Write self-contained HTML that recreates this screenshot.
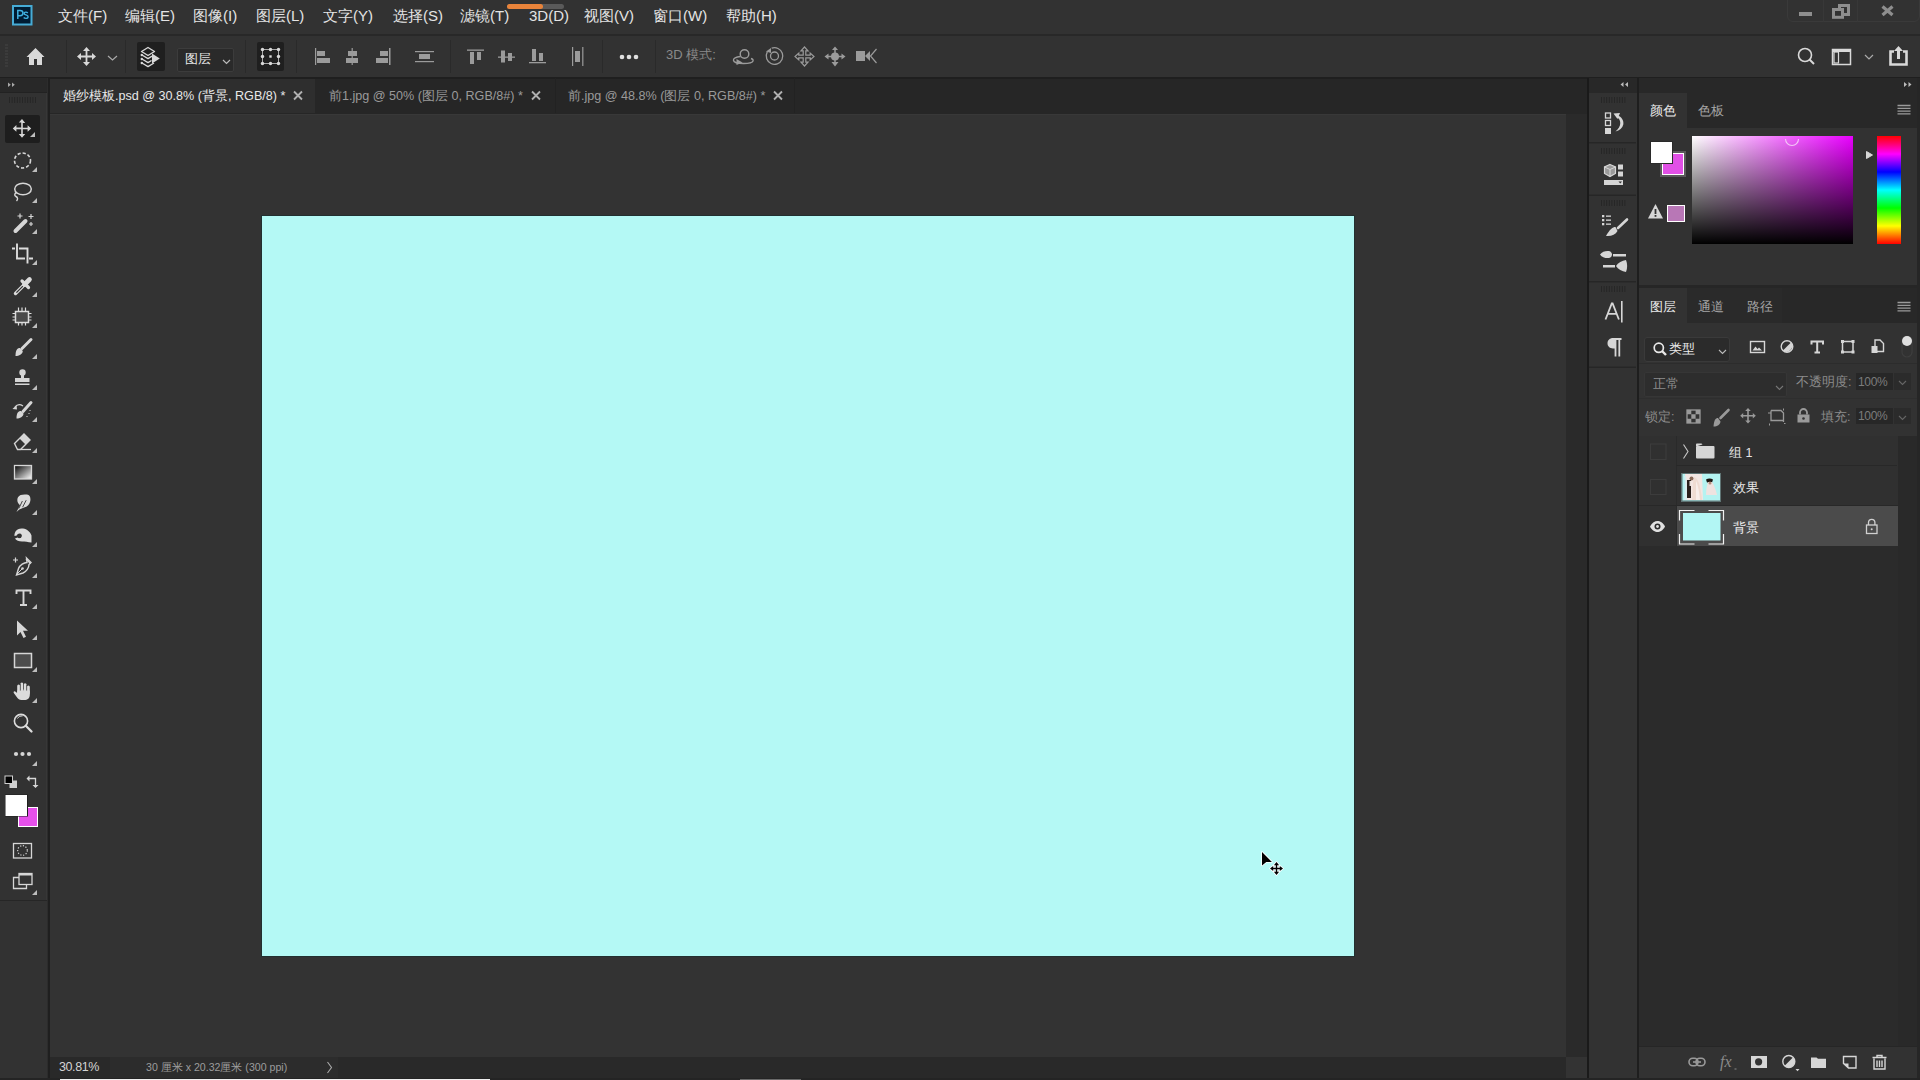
<!DOCTYPE html>
<html><head><meta charset="utf-8">
<style>
*{box-sizing:border-box;margin:0;padding:0}
html,body{width:1920px;height:1080px;overflow:hidden;background:#323232;font-family:"Liberation Sans",sans-serif;color:#d6d6d6}
.a{position:absolute}
.t{position:absolute;white-space:nowrap;line-height:1}
svg{position:absolute;overflow:visible}
</style></head><body>
<!-- menu bar -->
<div class="a" id="menubar" style="left:0;top:0;width:1920px;height:34px;background:#323232"></div>
<div class="a" style="left:0;top:34px;width:1920px;height:2px;background:#282828"></div>

<!-- PS logo -->
<svg style="left:0;top:0" width="40" height="30"><rect x="13" y="6" width="18.5" height="18.5" fill="#001c33" stroke="#46acd6" stroke-width="2"/><path d="M17.8 19V10.5h2.2c2 0 3 1 3 2.6s-1 2.7-3 2.7h-2.2" fill="none" stroke="#3fb0e0" stroke-width="1.5"/><path d="M27.8 13c-0.5-0.6-1.2-0.9-2-0.9-1 0-1.7 0.5-1.7 1.3 0 1.8 4 1 4 3.3 0 1-0.9 1.7-2.2 1.7-0.9 0-1.7-0.3-2.2-0.9" fill="none" stroke="#3fb0e0" stroke-width="1.4"/></svg>
<!-- menu items -->
<div class="t" style="left:58px;top:8px;font-size:15px;color:#e4e4e4">文件(F)</div>
<div class="t" style="left:125px;top:8px;font-size:15px;color:#e4e4e4">编辑(E)</div>
<div class="t" style="left:193px;top:8px;font-size:15px;color:#e4e4e4">图像(I)</div>
<div class="t" style="left:256px;top:8px;font-size:15px;color:#e4e4e4">图层(L)</div>
<div class="t" style="left:323px;top:8px;font-size:15px;color:#e4e4e4">文字(Y)</div>
<div class="t" style="left:393px;top:8px;font-size:15px;color:#e4e4e4">选择(S)</div>
<div class="t" style="left:460px;top:8px;font-size:15px;color:#e4e4e4">滤镜(T)</div>
<div class="t" style="left:529px;top:8px;font-size:15px;color:#e4e4e4">3D(D)</div>
<div class="t" style="left:584px;top:8px;font-size:15px;color:#e4e4e4">视图(V)</div>
<div class="t" style="left:653px;top:8px;font-size:15px;color:#e4e4e4">窗口(W)</div>
<div class="t" style="left:726px;top:8px;font-size:15px;color:#e4e4e4">帮助(H)</div>
<!-- progress -->
<div class="a" style="left:507px;top:4px;width:57px;height:5px;border-radius:3px;background:#5a5a5a"></div>
<div class="a" style="left:507px;top:4px;width:36px;height:5px;border-radius:3px;background:#e8833a"></div>
<!-- window controls -->
<div class="a" style="left:1787px;top:-2px;width:133px;height:24px;border:1px solid #3a3a3a;border-radius:0 0 6px 6px"></div>
<div class="a" style="left:1823px;top:0;width:1px;height:22px;background:#383838"></div>
<div class="a" style="left:1857px;top:0;width:1px;height:22px;background:#383838"></div>
<div class="a" style="left:1799px;top:12px;width:13px;height:4px;background:#8e8e8e"></div>
<svg style="left:0;top:0" width="1920" height="30"><path d="M1839.5 8V5.5h9v9h-4.5" fill="none" stroke="#8e8e8e" stroke-width="3"/><rect x="1833.5" y="9.5" width="9" height="7.8" fill="none" stroke="#8e8e8e" stroke-width="3"/><path d="M1882.5 6.5l10 8.5M1892.5 6.5l-10 8.5" stroke="#8e8e8e" stroke-width="3.2"/></svg>
<!-- options bar -->
<div class="a" id="optbar" style="left:0;top:36px;width:1920px;height:41px;background:#323232"></div>
<div class="a" style="left:0;top:77px;width:1920px;height:2px;background:#1f1f1f"></div>


<!-- options bar content -->
<svg style="left:5px;top:44px" width="4" height="25"><path d="M0 1h3M0 4h3M0 7h3M0 10h3M0 13h3M0 16h3M0 19h3M0 22h3" stroke="#444" stroke-width="1"/></svg>
<svg style="left:26px;top:47px" width="20" height="19"><path d="M9.5 1L0.5 10H3v8h5v-6h3v6h5v-8h2.5z" fill="#d9d9d9"/></svg>
<div class="a" style="left:66px;top:40px;width:1px;height:33px;background:#2a2a2a"></div>
<svg style="left:76px;top:46px" width="21" height="21"><path d="M10.5 1l-3.5 4h2.6v4.6H5V7L1 10.5 5 14v-2.6h4.6V16H7l3.5 4 3.5-4h-2.6v-4.6H16V14l4-3.5L16 7v2.6h-4.6V5H14z" fill="#d9d9d9"/></svg>
<svg style="left:107px;top:55px" width="11" height="6"><path d="M1 1l4.5 4L10 1" fill="none" stroke="#aaa" stroke-width="1.2"/></svg>
<div class="a" style="left:125px;top:40px;width:1px;height:33px;background:#2a2a2a"></div>
<div class="a" style="left:137px;top:42px;width:28px;height:29px;background:#1f1f1f;border-radius:2px"></div>
<svg style="left:0;top:0" width="300" height="80"><path d="M148 47.5l6.5 4-6.5 4-6.5-4z" fill="none" stroke="#d9d9d9" stroke-width="1.4" stroke-linejoin="round"/><path d="M142 55l6 3.6 4-2.4M142 59l6 3.6 3.5-2.1M142 63l6 3.6 6-3.6" fill="none" stroke="#d9d9d9" stroke-width="1.4" stroke-linejoin="round"/><circle cx="141.8" cy="55" r="1.2" fill="#d9d9d9"/><circle cx="141.8" cy="59" r="1.2" fill="#d9d9d9"/><circle cx="141.8" cy="63" r="1.2" fill="#d9d9d9"/><path d="M152 53.5v10l7.8-5z" fill="#d9d9d9"/></svg>
<div class="a" style="left:177px;top:48px;width:57px;height:24px;background:#2a2a2a;border:1px solid #3c3c3c;border-radius:2px"></div>
<div class="t" style="left:185px;top:52px;font-size:13px;color:#e6e6e6">图层</div>
<svg style="left:222px;top:59px" width="9" height="6"><path d="M1 1l3.5 3.5L8 1" fill="none" stroke="#bbb" stroke-width="1.2"/></svg>
<div class="a" style="left:245px;top:40px;width:1px;height:33px;background:#2a2a2a"></div>
<div class="a" style="left:257px;top:42px;width:27px;height:29px;background:#1f1f1f;border-radius:2px"></div>
<svg style="left:0;top:0" width="300" height="80"><rect x="262.5" y="49.5" width="16" height="14" fill="none" stroke="#a8a8a8" stroke-width="1"/><g fill="#d9d9d9"><circle cx="262.5" cy="49.5" r="1.7"/><circle cx="270.5" cy="49.5" r="1.7"/><circle cx="278.5" cy="49.5" r="1.7"/><circle cx="262.5" cy="56.5" r="1.7"/><circle cx="278.5" cy="56.5" r="1.7"/><circle cx="262.5" cy="63.5" r="1.7"/><circle cx="270.5" cy="63.5" r="1.7"/><circle cx="278.5" cy="63.5" r="1.7"/><rect x="269.3" y="55.3" width="2.4" height="2.4"/></g></svg>
<div class="a" style="left:296px;top:40px;width:1px;height:33px;background:#2a2a2a"></div>
<svg style="left:314px;top:47px" width="20" height="20"><g fill="#9b9b9b"><rect x="1" y="1" width="1.2" height="17"/><rect x="3" y="4" width="8" height="5"/><rect x="3" y="11" width="13" height="5"/></g></svg>
<svg style="left:344px;top:47px" width="16" height="20"><g fill="#9b9b9b"><rect x="4" y="4" width="9" height="5"/><rect x="2" y="11" width="12" height="5"/><rect x="7.6" y="1" width="1.2" height="17"/></g></svg>
<svg style="left:374px;top:47px" width="18" height="20"><g fill="#9b9b9b"><rect x="15" y="1" width="1.5" height="17"/><rect x="6" y="4" width="8" height="5"/><rect x="2" y="11" width="12" height="5"/></g></svg>
<svg style="left:414px;top:47px" width="22" height="18"><g fill="#9b9b9b"><rect x="1" y="4" width="19" height="1.2"/><rect x="1" y="14" width="19" height="1.2"/><rect x="5" y="7" width="11" height="5"/></g></svg>
<div class="a" style="left:450px;top:40px;width:1px;height:33px;background:#2a2a2a"></div>
<svg style="left:466px;top:48px" width="20" height="18"><g fill="#9b9b9b"><rect x="1" y="1.5" width="17" height="1.3"/><rect x="4" y="4" width="4" height="12"/><rect x="11" y="4" width="4" height="8"/></g></svg>
<svg style="left:497px;top:48px" width="20" height="18"><g fill="#9b9b9b"><rect x="1" y="8.5" width="17" height="1.3"/><rect x="4" y="2.5" width="4" height="12"/><rect x="11" y="5" width="4" height="8"/></g></svg>
<svg style="left:528px;top:47px" width="20" height="18"><g fill="#9b9b9b"><rect x="1" y="15" width="17" height="1.3"/><rect x="4" y="2" width="4" height="12"/><rect x="11" y="6" width="4" height="8"/></g></svg>
<svg style="left:570px;top:46px" width="16" height="22"><g fill="#9b9b9b"><rect x="2" y="1" width="1.2" height="19"/><rect x="12.2" y="1" width="1.2" height="19"/><rect x="5" y="5" width="5" height="11"/></g></svg>
<div class="a" style="left:602px;top:40px;width:1px;height:33px;background:#2a2a2a"></div>
<svg style="left:618px;top:53px" width="22" height="8"><g fill="#e0e0e0"><circle cx="4" cy="4" r="2.3"/><circle cx="11" cy="4" r="2.3"/><circle cx="18" cy="4" r="2.3"/></g></svg>
<div class="a" style="left:655px;top:40px;width:1px;height:33px;background:#2a2a2a"></div>
<div class="t" style="left:666px;top:48px;font-size:13px;color:#8a8a8a">3D 模式:</div>
<svg style="left:732px;top:47px" width="23" height="19"><circle cx="12.5" cy="7" r="4.3" fill="none" stroke="#9b9b9b" stroke-width="1.4"/><path d="M8.5 9.5C4 10 1 11.5 1.5 13.5c0.5 2 5 3 10 3 5 0 9-1 9.5-2.5 0.3-1-0.5-2-2-2.5" fill="none" stroke="#9b9b9b" stroke-width="1.4"/><path d="M4.5 12l6 3.5-6 2.5z" fill="#9b9b9b"/></svg>
<svg style="left:764px;top:46px" width="21" height="20"><circle cx="10.5" cy="10" r="8.3" fill="none" stroke="#9b9b9b" stroke-width="1.3" stroke-dasharray="46 6" transform="rotate(-110 10.5 10)"/><circle cx="10.5" cy="10" r="4" fill="none" stroke="#9b9b9b" stroke-width="1.3"/><path d="M2 5.5l5-3.5 0 5z" fill="#9b9b9b"/></svg>
<svg style="left:794px;top:46px" width="21" height="21"><path d="M10.5 1L14 4.8H11.8V9.2H16.2V7L20 10.5 16.2 14V11.8H11.8V16.2H14L10.5 20 7 16.2H9.2V11.8H4.8V14L1 10.5 4.8 7V9.2H9.2V4.8H7z" fill="none" stroke="#9b9b9b" stroke-width="1.2" stroke-linejoin="miter"/></svg>
<svg style="left:824px;top:46px" width="22" height="21"><circle cx="11" cy="10.5" r="4" fill="#9b9b9b"/><path d="M11 0.5l-3 3.5h6zM11 20.5l-3.5-4.5h7zM0.5 10.5l4-3v6zM21.5 10.5l-4-3v6z" fill="#9b9b9b"/><path d="M11 4v13M4 10.5h14" stroke="#9b9b9b" stroke-width="1.5"/></svg>
<svg style="left:855px;top:48px" width="23" height="17"><rect x="1" y="3" width="9" height="10" fill="#9b9b9b"/><path d="M10 8l5-5v10z" fill="#9b9b9b"/><path d="M21.5 1l-6 7 6 7" fill="none" stroke="#9b9b9b" stroke-width="1.2"/></svg>
<!-- right side -->
<svg style="left:1797px;top:47px" width="20" height="20"><circle cx="8" cy="8" r="6.5" fill="none" stroke="#d9d9d9" stroke-width="1.6"/><path d="M12.5 12.5l4.5 4.5" stroke="#d9d9d9" stroke-width="2"/></svg>
<svg style="left:1831px;top:48px" width="22" height="18"><rect x="1.5" y="1.5" width="18" height="15" fill="none" stroke="#d9d9d9" stroke-width="1.5"/><rect x="1.5" y="1.5" width="18" height="2.5" fill="#d9d9d9"/><rect x="3" y="4" width="4.5" height="11" fill="none" stroke="#d9d9d9" stroke-width="1.2"/></svg>
<svg style="left:1864px;top:54px" width="10" height="7"><path d="M1 1l4 4 4-4" fill="none" stroke="#aaa" stroke-width="1.2"/></svg>
<svg style="left:1888px;top:45px" width="22" height="22"><path d="M6 6.5H2.5v13h16v-13H15" fill="none" stroke="#d9d9d9" stroke-width="2.6"/><path d="M10.5 1L6 6h3v8h3V6h3z" fill="#d9d9d9"/></svg>

<!-- tool column -->
<div class="a" style="left:0;top:78px;width:48px;height:1002px;background:#323232"></div>
<div class="a" style="left:0;top:78px;width:48px;height:15px;background:#282828"></div>
<div class="a" style="left:0;top:92px;width:48px;height:1px;background:#222"></div>
<div class="a" style="left:48px;top:78px;width:2px;height:1002px;background:#1f1f1f"></div>
<div class="a" style="left:46px;top:93px;width:1px;height:807px;background:#373737"></div>
<div class="a" style="left:47px;top:78px;width:1px;height:1002px;background:#2c2c2c"></div>


<!-- tool content -->
<svg style="left:0;top:0" width="50" height="1080">
<!-- collapse >> -->
<path d="M8 82.5l2.8 2.2-2.8 2.2zM12 82.5l2.8 2.2-2.8 2.2z" fill="#a8a8a8"/>
<!-- grip -->
<rect x="9.0" y="97" width="1" height="6" fill="#262626"/><rect x="11.6" y="97" width="1" height="6" fill="#262626"/><rect x="14.2" y="97" width="1" height="6" fill="#262626"/><rect x="16.8" y="97" width="1" height="6" fill="#262626"/><rect x="19.4" y="97" width="1" height="6" fill="#262626"/><rect x="22.0" y="97" width="1" height="6" fill="#262626"/><rect x="24.6" y="97" width="1" height="6" fill="#262626"/><rect x="27.2" y="97" width="1" height="6" fill="#262626"/><rect x="29.8" y="97" width="1" height="6" fill="#262626"/><rect x="32.4" y="97" width="1" height="6" fill="#262626"/><rect x="35.0" y="97" width="1" height="6" fill="#262626"/>
<!-- selected bg -->
<rect x="5" y="115" width="35" height="28" rx="2" fill="#1e1e1e"/>
<!-- move -->
<path d="M22 119l-3.2 3.6h2.4v4.8h-4.8v-2.4L12.8 128.5l3.6 3.2v-2.4h4.8v4.8h-2.4l3.2 3.6 3.2-3.6h-2.4v-4.8h4.8v2.4l3.6-3.2-3.6-3.2v2.4h-4.8v-4.8h2.4z" fill="#d6d6d6"/>
<path d="M35 132v5h-5z" fill="#bdbdbd"/>
<path d="M37 167v5h-5z" fill="#bdbdbd"/><path d="M37 198v5h-5z" fill="#bdbdbd"/><path d="M37 229v5h-5z" fill="#bdbdbd"/><path d="M37 260v5h-5z" fill="#bdbdbd"/><path d="M37 292v5h-5z" fill="#bdbdbd"/><path d="M37 323v5h-5z" fill="#bdbdbd"/><path d="M37 354v5h-5z" fill="#bdbdbd"/><path d="M37 385v5h-5z" fill="#bdbdbd"/><path d="M37 417v5h-5z" fill="#bdbdbd"/><path d="M37 448v5h-5z" fill="#bdbdbd"/><path d="M37 479v5h-5z" fill="#bdbdbd"/><path d="M37 510v5h-5z" fill="#bdbdbd"/><path d="M37 542v5h-5z" fill="#bdbdbd"/><path d="M37 573v5h-5z" fill="#bdbdbd"/><path d="M37 604v5h-5z" fill="#bdbdbd"/><path d="M37 635v5h-5z" fill="#bdbdbd"/><path d="M37 667v5h-5z" fill="#bdbdbd"/><path d="M37 698v5h-5z" fill="#bdbdbd"/><path d="M37 761v5h-5z" fill="#bdbdbd"/>
<!-- marquee -->
<ellipse cx="22.5" cy="160.5" rx="8" ry="7.5" fill="none" stroke="#d6d6d6" stroke-width="1.6" stroke-dasharray="3.2 2"/>
<!-- lasso -->
<ellipse cx="23" cy="189" rx="8.3" ry="5.8" fill="none" stroke="#d6d6d6" stroke-width="1.5"/>
<path d="M16.5 192.5c-2 1-2.5 3-0.5 4 2 1 2 3 0.5 4.5" fill="none" stroke="#d6d6d6" stroke-width="1.4"/>
<!-- wand -->
<path d="M15.5 231l10-10" stroke="#d6d6d6" stroke-width="4" stroke-linecap="round"/>
<path d="M20 213.5v5M17.5 216h5M31 214v5M28.5 216.5h5M31 222v4M29 224h4" stroke="#d6d6d6" stroke-width="1.2"/>
<!-- crop -->
<path d="M12 248.5h3M17 243.5v15h8M19 248.5h8.5v15M29 258.5h4" fill="none" stroke="#dcdcdc" stroke-width="1.9"/>
<!-- eyedropper -->
<path d="M15.5 293.5l8-8" stroke="#dcdcdc" stroke-width="3.4" stroke-linecap="round" fill="none"/>
<path d="M16.4 292.6l6.5-6.5" stroke="#323232" stroke-width="1.3"/>
<path d="M22 281l6.5 6.5" stroke="#dcdcdc" stroke-width="3.2" stroke-linecap="round"/>
<path d="M24.5 284.5l5-5" stroke="#dcdcdc" stroke-width="4.6" stroke-linecap="round"/>
<!-- frame -->
<rect x="15.5" y="311.5" width="13" height="11" fill="#4a4a4a" stroke="#dcdcdc" stroke-width="1.5"/>
<path d="M18.5 307.5v4M22 307.5v4M25.5 307.5v4M18.5 322.5v3M22 322.5v3M25.5 322.5v3M12.5 313.5h3M12.5 317h3M12.5 320h3M28.5 313.5h3M28.5 317h3M28.5 320h3" stroke="#dcdcdc" stroke-width="1.2"/>
<!-- brush -->
<path d="M31 339.5l-9 9" stroke="#d6d6d6" stroke-width="3" stroke-linecap="round"/>
<path d="M20 348c-3 0-4.5 2.5-4.5 8 3.5 0 7-1.5 7.3-5z" fill="#d6d6d6"/>
<!-- stamp -->
<circle cx="22.5" cy="372.5" r="3.2" fill="#d6d6d6"/>
<path d="M21 375h3v3h5.5v4h-14.5v-4h6z" fill="#d6d6d6"/>
<rect x="15" y="383.5" width="14.5" height="1.5" fill="#d6d6d6"/>
<!-- history brush -->
<path d="M31 402.5l-8 9" stroke="#d6d6d6" stroke-width="3" stroke-linecap="round"/>
<path d="M21 411c-3 0-4.5 2-4.5 7.5 3.5 0 6.8-1.5 7-5z" fill="#d6d6d6"/>
<path d="M23 406c-3-2-6-1.5-8 1" fill="none" stroke="#d6d6d6" stroke-width="1.2"/>
<path d="M12.5 409l4-4 0.5 4.5z" fill="#d6d6d6"/>
<path d="M30 410v1M29 413v1M27 416v1" stroke="#d6d6d6" stroke-width="1"/>
<!-- eraser -->
<path d="M14.5 443.5l9.5-9.5 6 6-9.5 9.5h-3z" fill="none" stroke="#d6d6d6" stroke-width="1.4"/>
<path d="M19.5 438.5l4.5-4.5 6 6-4.5 4.5z" fill="#d6d6d6"/>
<path d="M21 449.5h10" stroke="#d6d6d6" stroke-width="1.3"/>
<!-- gradient -->
<defs><linearGradient id="gg" x1="0" y1="0" x2="1" y2="1"><stop offset="0" stop-color="#000"/><stop offset="1" stop-color="#fff"/></linearGradient></defs>
<rect x="14.5" y="465.5" width="17" height="13.5" fill="url(#gg)" stroke="#d6d6d6" stroke-width="1.3"/>
<!-- blur / smudge (drop) -->
<path d="M16.5 512l3.5-6.8c-2.8-2-3.3-5.5-2-8 1.5-2.5 5-3 9-2.6 3 0.4 3.8 3.2 3.3 6.4-0.5 3.2-3 5.8-6.2 6.6l-4.8 1.8z" fill="#dcdcdc"/>
<path d="M18.8 508.5l3.6-7.5M22.6 507.2l3.6-7" stroke="#323232" stroke-width="0.9"/>
<!-- dodge -->
<path d="M15.5 531.5c1.5-2.5 4.5-3.5 7.5-3 4 0.5 7.5 3.5 8.5 7v7c-3.5-0.5-6.5-1-9.5-1-3 0-6-1-7-3l2.5-1c1 1 3 1 4-0.5 1-1.5 0-3.5-2-3.5-1.5 0-2.5 1-2.7 2l-2.3 0.5c-0.2-1.5 0.2-3 1-4.5z" fill="#dcdcdc"/>
<!-- pen -->
<path d="M15.5 557.5v5M13 560h5" stroke="#d6d6d6" stroke-width="1.2"/>
<path d="M26.5 558l4.5 4.5-2 2c0 3-2.5 7-6 8.5l-6.5 2 2-6.5c1.5-3.5 5.5-6 8.5-6z" fill="none" stroke="#d6d6d6" stroke-width="1.4"/>
<path d="M25.5 559.5l4.5 4.5 1-1-4.5-4.5z" fill="#d6d6d6"/>
<path d="M16.5 574.5l5.5-5.5" stroke="#d6d6d6" stroke-width="1"/>
<circle cx="22.5" cy="568.5" r="1.3" fill="#d6d6d6"/>
<!-- type -->
<path d="M16.5 594v-3.5h14v3.5M23.5 590.5v14.5M20 605h7" fill="none" stroke="#d6d6d6" stroke-width="1.9"/>
<!-- path select -->
<path d="M17 620.5v15l3.5-3.5 3 6 2.5-1.2-3-6h5z" fill="#d6d6d6"/>
<!-- rectangle -->
<rect x="14.5" y="653.5" width="17" height="14" fill="#4d4d4d" stroke="#d6d6d6" stroke-width="1.5"/>
<!-- hand -->
<g fill="#dcdcdc"><rect x="17.2" y="684.5" width="3" height="10" rx="1.5"/><rect x="20.4" y="682.5" width="3" height="11" rx="1.5"/><rect x="23.6" y="683.2" width="3" height="11" rx="1.5"/><rect x="26.8" y="685.5" width="3" height="9" rx="1.5"/>
<path d="M17.2 690.5h12.6v4.5c0 3-2.2 5-5.5 5h-3c-1.8 0-3.2-1-4.2-2.5l-3.3-4.5c-0.6-1 0.3-2 1.4-1.5l2 1.5z"/></g>
<path d="M20.3 684v6.5M23.5 683v6.5M26.7 685v5.5" stroke="#323232" stroke-width="0.6"/>
<!-- zoom -->
<circle cx="21" cy="721" r="6.6" fill="none" stroke="#dcdcdc" stroke-width="1.6"/>
<path d="M17.5 718.5c1-1.8 3-2.8 5-2.5" fill="none" stroke="#dcdcdc" stroke-width="1"/>
<path d="M25.8 725.8l5.7 5.7" stroke="#dcdcdc" stroke-width="2.3" stroke-linecap="round"/>
<!-- more -->
<circle cx="16" cy="754" r="2.1" fill="#d6d6d6"/><circle cx="22.5" cy="754" r="2.1" fill="#d6d6d6"/><circle cx="29" cy="754" r="2.1" fill="#d6d6d6"/>
<!-- default colors -->
<rect x="9.5" y="780.5" width="7.5" height="7.5" fill="#d0d0d0"/>
<rect x="5" y="776" width="7.5" height="7.5" fill="#000" stroke="#d0d0d0" stroke-width="1"/>
<!-- swap -->
<path d="M29 778.5h6.5v6.5" fill="none" stroke="#d6d6d6" stroke-width="1.3"/>
<path d="M26.5 778.5l3-3v6zM35.5 788l-3-3h6z" fill="#d6d6d6"/>
<!-- fg/bg -->
<rect x="18" y="807" width="20" height="20" fill="#fff"/>
<rect x="19" y="808" width="18" height="18" fill="#e550ea"/>
<rect x="5" y="794.5" width="23" height="22" fill="#1e1e1e"/>
<rect x="5.5" y="795" width="21.5" height="21" fill="#fff"/>
<!-- quick mask -->
<rect x="13.5" y="843.5" width="18" height="14.5" fill="none" stroke="#d6d6d6" stroke-width="1.3"/>
<circle cx="22.5" cy="850.5" r="4.8" fill="none" stroke="#d6d6d6" stroke-width="1.2" stroke-dasharray="1.2 1.6"/>
<!-- screen mode -->
<rect x="19" y="873.5" width="13" height="11" fill="#323232" stroke="#d6d6d6" stroke-width="1.3"/>
<rect x="19" y="873.5" width="13" height="2" fill="#d6d6d6"/>
<path d="M19 877.5h-5.5v11h13v-4" fill="none" stroke="#d6d6d6" stroke-width="1.3"/>
<path d="M37 890v5h-5z" fill="#bdbdbd"/>
<!-- panel bottom line -->
<rect x="0" y="900" width="47" height="1" fill="#262626"/>
</svg>

<!-- doc tab bar -->
<div class="a" style="left:50px;top:79px;width:1537px;height:34px;background:#262626"></div>
<div class="a" style="left:50px;top:79px;width:265px;height:34px;background:#2e2e2e"></div>
<div class="a" style="left:50px;top:113px;width:1537px;height:1px;background:#262626"></div>


<!-- tab texts -->
<div class="t" style="left:63px;top:89.5px;font-size:12.6px;color:#e8e8e8">婚纱模板.psd @ 30.8% (背景, RGB/8) *</div>
<svg style="left:293px;top:91px" width="10" height="9"><path d="M1 0.5l8 8M9 0.5l-8 8" stroke="#b0b0b0" stroke-width="1.8"/></svg>
<div class="t" style="left:329px;top:89.5px;font-size:12.6px;color:#9a9a9a">前1.jpg @ 50% (图层 0, RGB/8#) *</div>
<svg style="left:531px;top:91px" width="10" height="9"><path d="M1 0.5l8 8M9 0.5l-8 8" stroke="#b0b0b0" stroke-width="1.8"/></svg>
<div class="a" style="left:555px;top:78px;width:1px;height:35px;background:#222"></div>
<div class="t" style="left:568px;top:89.5px;font-size:12.6px;color:#9a9a9a">前.jpg @ 48.8% (图层 0, RGB/8#) *</div>
<svg style="left:773px;top:91px" width="10" height="9"><path d="M1 0.5l8 8M9 0.5l-8 8" stroke="#b0b0b0" stroke-width="1.8"/></svg>
<div class="a" style="left:794px;top:78px;width:1px;height:35px;background:#222"></div>

<!-- pasteboard -->
<div class="a" style="left:50px;top:114px;width:1516px;height:943px;background:#333333"></div>
<div class="a" style="left:50px;top:114px;width:1516px;height:1px;background:#383838"></div>
<!-- vertical scrollbar track -->
<div class="a" style="left:1566px;top:114px;width:21px;height:943px;background:#2a2a2a"></div>
<!-- status bar -->
<div class="a" style="left:50px;top:1057px;width:1516px;height:23px;background:#292929"></div>
<div class="a" style="left:1566px;top:1057px;width:21px;height:21px;background:#333333"></div>


<div class="a" style="left:50px;top:1057px;width:60px;height:22px;background:#292929"></div>
<div class="a" style="left:110px;top:1057px;width:228px;height:22px;background:#2c2c2c"></div>
<div class="t" style="left:59px;top:1061px;font-size:12.5px;color:#d4d4d4;letter-spacing:-0.4px">30.81%</div>
<div class="t" style="left:146px;top:1062px;font-size:10.6px;color:#9c9c9c">30 厘米 x 20.32厘米 (300 ppi)</div>
<svg style="left:326px;top:1061px" width="8" height="13"><path d="M1.5 1l4 5.5-4 5.5" fill="none" stroke="#aaa" stroke-width="1.1"/></svg>
<div class="a" style="left:60px;top:1079px;width:430px;height:1px;background:#f0f0f0"></div>
<div class="a" style="left:740px;top:1079px;width:61px;height:1px;background:#6a6a6a"></div>

<!-- canvas -->
<div class="a" style="left:261px;top:215px;width:1094px;height:742px;background:#223030"></div>
<div class="a" style="left:262px;top:216px;width:1092px;height:740px;background:#b4f9f5"></div>


<!-- cursor -->
<svg style="left:1250px;top:840px" width="40" height="40"><g stroke="#fff" stroke-width="1.6" stroke-linejoin="round" fill="#fff"><path d="M12 12v13.5l4.3-3.6h5.6z"/><path d="M26.5 24v9M22 28.5h9" stroke-width="3.2"/><path d="M26.5 22l-2.6 3.2h5.2zM26.5 35l-2.6-3.2h5.2zM20 28.5l3.2-2.6v5.2zM33 28.5l-3.2-2.6v5.2z"/></g>
<path d="M12 12v13.5l4.3-3.6h5.6z" fill="#000"/><path d="M26.5 24v9M22 28.5h9" stroke="#000" stroke-width="1.4"/><path d="M26.5 22l-2.6 3.2h5.2zM26.5 35l-2.6-3.2h5.2zM20 28.5l3.2-2.6v5.2zM33 28.5l-3.2-2.6v5.2z" fill="#000"/></svg>
<!-- right separator -->
<div class="a" style="left:1587px;top:78px;width:2px;height:1002px;background:#1a1a1a"></div>
<!-- dock column -->
<div class="a" style="left:1589px;top:78px;width:48px;height:1002px;background:#323232"></div>
<div class="a" style="left:1589px;top:78px;width:48px;height:15px;background:#282828"></div>
<div class="a" style="left:1637px;top:78px;width:2px;height:1002px;background:#1e1e1e"></div>

<!-- panels column -->
<div class="a" style="left:1639px;top:78px;width:281px;height:1002px;background:#323232"></div>
<div class="a" style="left:1639px;top:78px;width:281px;height:15px;background:#282828"></div>

<!-- dock column content -->
<svg style="left:0;top:0" width="1920" height="1080">
<path d="M1628 82l-3 2.5 3 2.5zM1623.5 82l-3 2.5 3 2.5z" fill="#bbb"/>
<path d="M1904 82l3 2.5-3 2.5zM1908.5 82l3 2.5-3 2.5z" fill="#bbb"/>
<rect x="1589" y="142" width="47" height="1.5" fill="#262626"/>
<rect x="1589" y="194.5" width="47" height="1.5" fill="#262626"/>
<rect x="1589" y="281" width="47" height="1.5" fill="#262626"/>
<rect x="1589" y="366.5" width="47" height="1.5" fill="#262626"/>
<rect x="1601.0" y="97" width="1" height="6" fill="#262626"/><rect x="1603.6" y="97" width="1" height="6" fill="#262626"/><rect x="1606.2" y="97" width="1" height="6" fill="#262626"/><rect x="1608.8" y="97" width="1" height="6" fill="#262626"/><rect x="1611.4" y="97" width="1" height="6" fill="#262626"/><rect x="1614.0" y="97" width="1" height="6" fill="#262626"/><rect x="1616.6" y="97" width="1" height="6" fill="#262626"/><rect x="1619.2" y="97" width="1" height="6" fill="#262626"/><rect x="1621.8" y="97" width="1" height="6" fill="#262626"/><rect x="1624.4" y="97" width="1" height="6" fill="#262626"/><rect x="1601.0" y="148" width="1" height="6" fill="#262626"/><rect x="1603.6" y="148" width="1" height="6" fill="#262626"/><rect x="1606.2" y="148" width="1" height="6" fill="#262626"/><rect x="1608.8" y="148" width="1" height="6" fill="#262626"/><rect x="1611.4" y="148" width="1" height="6" fill="#262626"/><rect x="1614.0" y="148" width="1" height="6" fill="#262626"/><rect x="1616.6" y="148" width="1" height="6" fill="#262626"/><rect x="1619.2" y="148" width="1" height="6" fill="#262626"/><rect x="1621.8" y="148" width="1" height="6" fill="#262626"/><rect x="1624.4" y="148" width="1" height="6" fill="#262626"/><rect x="1601.0" y="200" width="1" height="6" fill="#262626"/><rect x="1603.6" y="200" width="1" height="6" fill="#262626"/><rect x="1606.2" y="200" width="1" height="6" fill="#262626"/><rect x="1608.8" y="200" width="1" height="6" fill="#262626"/><rect x="1611.4" y="200" width="1" height="6" fill="#262626"/><rect x="1614.0" y="200" width="1" height="6" fill="#262626"/><rect x="1616.6" y="200" width="1" height="6" fill="#262626"/><rect x="1619.2" y="200" width="1" height="6" fill="#262626"/><rect x="1621.8" y="200" width="1" height="6" fill="#262626"/><rect x="1624.4" y="200" width="1" height="6" fill="#262626"/><rect x="1601.0" y="286" width="1" height="6" fill="#262626"/><rect x="1603.6" y="286" width="1" height="6" fill="#262626"/><rect x="1606.2" y="286" width="1" height="6" fill="#262626"/><rect x="1608.8" y="286" width="1" height="6" fill="#262626"/><rect x="1611.4" y="286" width="1" height="6" fill="#262626"/><rect x="1614.0" y="286" width="1" height="6" fill="#262626"/><rect x="1616.6" y="286" width="1" height="6" fill="#262626"/><rect x="1619.2" y="286" width="1" height="6" fill="#262626"/><rect x="1621.8" y="286" width="1" height="6" fill="#262626"/><rect x="1624.4" y="286" width="1" height="6" fill="#262626"/>
<!-- history -->
<rect x="1605.5" y="113" width="5" height="5" fill="none" stroke="#d6d6d6" stroke-width="1.3"/>
<rect x="1605.5" y="120.5" width="5" height="5" fill="none" stroke="#d6d6d6" stroke-width="1.3"/>
<rect x="1605" y="128" width="6" height="6" fill="#d6d6d6"/>
<path d="M1613.5 113.5l6.5-0.5-2.5 6z" fill="#d6d6d6"/><path d="M1617.5 115.5C1621.5 116.5 1624 120.5 1623.3 124.5 1622.5 128 1619.5 130.5 1615.5 131.5 1618.5 129 1620.3 126 1620.3 123 1620.3 120.5 1619 118.5 1616.8 117.3z" fill="#d6d6d6"/>
<!-- 3D -->
<path d="M1610 164.5l5.5 2.5v6.5l-5.5 3-5.5-3v-6.5z" fill="#9a9a9a" stroke="#d6d6d6" stroke-width="1.2"/>
<path d="M1604.5 167l5.5 2.5 5.5-2.5M1610 169.5v7" fill="none" stroke="#d6d6d6" stroke-width="1"/>
<rect x="1618" y="164.5" width="5" height="5" fill="#d6d6d6"/>
<rect x="1618" y="171.5" width="5" height="5" fill="#d6d6d6"/>
<rect x="1604" y="180" width="19" height="5" fill="#d6d6d6"/>
<path d="M1618.5 181.5h3.5l-1.75 2z" fill="#323232"/>
<!-- brush settings -->
<rect x="1602" y="215" width="2.3" height="2.3" fill="#d6d6d6"/><rect x="1602" y="219" width="2.3" height="2.3" fill="#d6d6d6"/><rect x="1602" y="223" width="2.3" height="2.3" fill="#d6d6d6"/>
<rect x="1606" y="215.5" width="5" height="1.3" fill="#d6d6d6"/><rect x="1606" y="219.5" width="5" height="1.3" fill="#d6d6d6"/><rect x="1606" y="223.5" width="5" height="1.3" fill="#d6d6d6"/>
<path d="M1627 219.5l-9 8.5" stroke="#d6d6d6" stroke-width="2.6" stroke-linecap="round"/>
<path d="M1615.5 227c-3 0-5.5 2-9.5 9 5 0.5 9.5-1 11.5-5z" fill="#d6d6d6"/>
<!-- brush presets -->
<path d="M1600 254.5c2-3 6-4 9-3.5 2 0.5 3 2 3 3.5s-1 3-3 3.5c-3 0.5-7-0.5-9-3.5z" fill="#d6d6d6"/>
<rect x="1613" y="254" width="13" height="2.5" fill="#d6d6d6"/>
<rect x="1603" y="265" width="12" height="2.5" fill="#d6d6d6"/>
<path d="M1616 266c2-3 6-5.5 10-6 1.5 4 1.5 8 0 12-4-0.5-8-3-10-6z" fill="#d6d6d6"/>
<!-- A| -->
<path d="M1605.5 319.5l6.3-16h0.8l6.3 16M1607.8 313.8h8.8" fill="none" stroke="#d6d6d6" stroke-width="1.8"/>
<rect x="1621" y="301" width="1.6" height="21.5" fill="#d6d6d6"/>
<!-- pilcrow -->
<path d="M1613 338h8.5v2h-1.3v16.5h-1.8V340h-2v16.5h-1.8V348.5h-1.6c-3 0-5.5-2-5.5-5.2s2.5-5.3 5.5-5.3z" fill="#d6d6d6"/>
</svg>

<!-- color panel -->
<div class="a" style="left:1639px;top:93px;width:278px;height:35px;background:#282828"></div>
<div class="a" style="left:1639px;top:93px;width:48px;height:35px;background:#323232"></div>
<div class="t" style="left:1650px;top:105px;font-size:12.5px;color:#ececec">颜色</div>
<div class="t" style="left:1698px;top:105px;font-size:12.5px;color:#a6a6a6">色板</div>
<svg style="left:1897px;top:104px" width="14" height="12"><path d="M0.5 1.5h13M0.5 4.3h13M0.5 7.1h13M0.5 9.9h13" stroke="#9a9a9a" stroke-width="1.3"/></svg>
<div class="a" style="left:1917px;top:78px;width:3px;height:1002px;background:#262626"></div>
<!-- fg/bg swatches -->
<div class="a" style="left:1660px;top:151px;width:26px;height:26px;background:#5a5a5a"></div>
<div class="a" style="left:1662px;top:153px;width:22px;height:22px;background:#fff"></div>
<div class="a" style="left:1663px;top:154px;width:20px;height:20px;background:#e150e6"></div>
<div class="a" style="left:1650px;top:141px;width:23px;height:23px;background:#2a2a2a"></div>
<div class="a" style="left:1651px;top:142px;width:21px;height:21px;background:#fff"></div>
<svg style="left:1647px;top:203px" width="18" height="17"><path d="M8.5 1L1 15.5h15z" fill="#d6d6d6"/><rect x="7.6" y="6" width="1.8" height="5" fill="#323232"/><rect x="7.6" y="12" width="1.8" height="1.8" fill="#323232"/></svg>
<div class="a" style="left:1667px;top:205px;width:18px;height:17px;background:#fff"></div>
<div class="a" style="left:1668px;top:206px;width:16px;height:15px;background:#b877b6"></div>
<!-- color field -->
<div class="a" style="left:1692px;top:136px;width:161px;height:108px;background:linear-gradient(to top,#000,rgba(0,0,0,0)),linear-gradient(to right,#fff,#e900ff)"></div>
<svg style="left:1784px;top:128px" width="16" height="20"><path d="M1.5 11a6.5 6.5 0 0 0 13 0" fill="none" stroke="#f4c8f8" stroke-width="1.1"/></svg>
<!-- hue bar -->
<div class="a" style="left:1877px;top:136px;width:24px;height:108px;background:linear-gradient(to bottom,#ff0000 0%,#ff00ff 16.7%,#0000ff 33.3%,#00ffff 50%,#00ff00 66.7%,#ffff00 83.3%,#ff0000 100%)"></div>
<svg style="left:1865px;top:150px" width="9" height="10"><path d="M1.5 1.5l6 3.5-6 3.5z" fill="#d6d6d6" stroke="#d6d6d6" stroke-width="1" stroke-linejoin="round"/></svg>

<!-- layers panel -->
<div class="a" style="left:1639px;top:285px;width:278px;height:3px;background:#262626"></div>
<div class="a" style="left:1639px;top:288px;width:278px;height:35px;background:#282828"></div>
<div class="a" style="left:1687px;top:288px;width:95px;height:35px;background:#2a2a2a"></div>
<div class="a" style="left:1639px;top:288px;width:48px;height:35px;background:#323232"></div>
<div class="t" style="left:1650px;top:301px;font-size:12.5px;color:#ececec">图层</div>
<div class="t" style="left:1698px;top:301px;font-size:12.5px;color:#a6a6a6">通道</div>
<div class="t" style="left:1747px;top:301px;font-size:12.5px;color:#a6a6a6">路径</div>
<svg style="left:1897px;top:301px" width="14" height="12"><path d="M0.5 1.5h13M0.5 4.3h13M0.5 7.1h13M0.5 9.9h13" stroke="#9a9a9a" stroke-width="1.3"/></svg>
<!-- filter row -->
<div class="a" style="left:1644px;top:337px;width:86px;height:25px;background:#2b2b2b;border:1px solid #3a3a3a;border-radius:3px"></div>
<svg style="left:1653px;top:342px" width="15" height="15"><circle cx="5.8" cy="5.8" r="4.6" fill="none" stroke="#e8e8e8" stroke-width="1.7"/><path d="M9 9l4 4" stroke="#e8e8e8" stroke-width="2.4"/></svg>
<div class="t" style="left:1669px;top:343px;font-size:12.5px;color:#ececec">类型</div>
<svg style="left:1718px;top:349px" width="9" height="6"><path d="M1 1l3.5 3.5L8 1" fill="none" stroke="#bbb" stroke-width="1.1"/></svg>
<svg style="left:0;top:0" width="1920" height="1080">
<rect x="1750.5" y="341.5" width="14" height="11" fill="none" stroke="#d6d6d6" stroke-width="1.4"/>
<path d="M1752.5 350.5l3-4 2 2.5 1.5-1.5 3 3z" fill="#d6d6d6"/>
<circle cx="1787" cy="346.5" r="5.8" fill="none" stroke="#d6d6d6" stroke-width="1.4"/>
<path d="M1791 342.5a5.8 5.8 0 0 1-8.1 8.1z" fill="#d6d6d6"/>
<path d="M1811.5 344.5v-3h11.5v3M1817.2 341.5v11M1814.5 352.5h5.5" fill="none" stroke="#d6d6d6" stroke-width="2"/>
<rect x="1842.5" y="341.5" width="10.5" height="10.5" fill="none" stroke="#d6d6d6" stroke-width="1.5"/>
<rect x="1841" y="340" width="3" height="3" fill="#d6d6d6"/><rect x="1851.5" y="340" width="3" height="3" fill="#d6d6d6"/><rect x="1841" y="350.5" width="3" height="3" fill="#d6d6d6"/><rect x="1851.5" y="350.5" width="3" height="3" fill="#d6d6d6"/>
<path d="M1875 340h5l3.5 3.5v8h-8.5z" fill="none" stroke="#d6d6d6" stroke-width="1.4"/>
<rect x="1871.5" y="346" width="6" height="7" fill="#d6d6d6"/>
<rect x="1902" y="336" width="10" height="21" rx="5" fill="none" stroke="#3e3e3e" stroke-width="1.2"/>
<circle cx="1907" cy="341" r="5" fill="#e0e0e0"/>
</svg>
<div class="a" style="left:1639px;top:363px;width:278px;height:1px;background:#2c2c2c"></div>
<!-- blend mode -->
<div class="a" style="left:1644px;top:372px;width:143px;height:25px;background:#2d2d2d;border:1px solid #363636;border-radius:2px"></div>
<div class="t" style="left:1653px;top:378px;font-size:12.5px;color:#8c8c8c">正常</div>
<svg style="left:1775px;top:385px" width="9" height="6"><path d="M1 1l3.5 3.5L8 1" fill="none" stroke="#777" stroke-width="1.1"/></svg>
<div class="t" style="left:1796px;top:376px;font-size:12.5px;color:#8c8c8c">不透明度:</div>
<div class="a" style="left:1856px;top:373px;width:37px;height:17px;background:#272727"></div>
<div class="t" style="left:1858px;top:376px;font-size:12px;color:#7c7c7c;letter-spacing:-0.3px">100%</div>
<div class="a" style="left:1894px;top:373px;width:17px;height:17px;background:#2b2b2b"></div>
<svg style="left:1898px;top:380px" width="9" height="6"><path d="M1 1l3.5 3.5L8 1" fill="none" stroke="#666" stroke-width="1.1"/></svg>
<div class="a" style="left:1639px;top:398px;width:278px;height:1px;background:#2e2e2e"></div>
<!-- lock row -->
<div class="t" style="left:1645px;top:411px;font-size:12.5px;color:#8c8c8c">锁定:</div>
<svg style="left:0;top:0" width="1920" height="1080">
<rect x="1687" y="410" width="13" height="13" fill="none" stroke="#9a9a9a" stroke-width="1.3"/>
<path d="M1687 410h4.3v4.3h-4.3zM1695.6 410h4.4v4.3h-4.4zM1691.3 414.3h4.3v4.4h-4.3zM1687 418.7h4.3v4.3h-4.3zM1695.6 418.7h4.4v4.3h-4.4z" fill="#9a9a9a"/>
<path d="M1728.5 410l-8 8" stroke="#9a9a9a" stroke-width="2.6" stroke-linecap="round"/>
<path d="M1718 418c-2.5 0-4 2-4.5 8.5 4 0 6.5-1.5 7-5z" fill="#9a9a9a"/>
<path d="M1748 408l-2.8 3h2v4h-4v-2l-3 2.8 3 2.8v-2h4v4h-2l2.8 3 2.8-3h-2v-4h4v2l3-2.8-3-2.8v2h-4v-4h2z" fill="#9a9a9a"/>
<path d="M1771 410.5h10l2.5 2.5v9M1771 410.5v10h12.5" fill="none" stroke="#9a9a9a" stroke-width="1.3"/>
<path d="M1768 413h3M1769.5 423.5v2M1783.5 408.5v2M1784 423.5h1.5" stroke="#9a9a9a" stroke-width="1"/>
<path d="M1800 414.5v-2a3.5 3.5 0 0 1 7 0v2" fill="none" stroke="#9a9a9a" stroke-width="1.8"/>
<rect x="1797.5" y="414.5" width="12" height="8" fill="#9a9a9a"/>
<circle cx="1803.5" cy="418.5" r="1.3" fill="#323232"/>
</svg>
<div class="t" style="left:1821px;top:411px;font-size:12.5px;color:#8c8c8c">填充:</div>
<div class="a" style="left:1856px;top:408px;width:37px;height:16px;background:#272727"></div>
<div class="t" style="left:1858px;top:410px;font-size:12px;color:#7c7c7c;letter-spacing:-0.3px">100%</div>
<div class="a" style="left:1894px;top:408px;width:17px;height:16px;background:#2b2b2b"></div>
<svg style="left:1898px;top:415px" width="9" height="6"><path d="M1 1l3.5 3.5L8 1" fill="none" stroke="#666" stroke-width="1.1"/></svg>

<!-- layer list -->
<div class="a" style="left:1639px;top:436px;width:259px;height:611px;background:#2b2b2b"></div>
<div class="a" style="left:1898px;top:436px;width:19px;height:611px;background:#292929"></div>
<div class="a" style="left:1639px;top:436px;width:259px;height:110px;background:#303030"></div>
<div class="a" style="left:1676px;top:436px;width:1px;height:110px;background:#2a2a2a"></div>
<div class="a" style="left:1676px;top:465px;width:221px;height:1px;background:#282828"></div>
<div class="a" style="left:1639px;top:505px;width:259px;height:1px;background:#282828"></div>
<div class="a" style="left:1677px;top:506px;width:221px;height:40px;background:#4b4b4b"></div>
<svg style="left:0;top:0" width="1920" height="1080">
<rect x="1650.5" y="444" width="15.5" height="15.5" fill="none" stroke="#3c3c3c" stroke-width="1"/>
<rect x="1650.5" y="479.5" width="15.5" height="15" fill="none" stroke="#3c3c3c" stroke-width="1"/>
<path d="M1683.5 444.5l4.5 7-4.5 7" fill="none" stroke="#c8c8c8" stroke-width="1.1"/>
<path d="M1696 446.5v-2c0-0.5 0.5-1 1-1h4.5l1 1h0z" fill="#d6d6d6"/>
<rect x="1696" y="446" width="18.5" height="12.5" rx="1" fill="#d6d6d6"/>
<path d="M1650 526.5c2-4 5-5.5 7.5-5.5s5.5 1.5 7.5 5.5c-2 4-5 5.5-7.5 5.5s-5.5-1.5-7.5-5.5z" fill="#e0e0e0"/>
<circle cx="1657.5" cy="526.5" r="3" fill="#2b2b2b"/>
<circle cx="1657.5" cy="526.5" r="1.4" fill="#e0e0e0"/>
<!-- thumb effect -->
<rect x="1681" y="473" width="40" height="29" fill="#5f7474"/>
<rect x="1682.5" y="474" width="37.5" height="26.5" fill="#b4f3f1"/>
<path d="M1685 474h17l1 26h-18z" fill="#f3e6e2"/>
<path d="M1684 476c1 4 1 10 0 24h3c0-8 0-16-1-24z" fill="#d8eef0"/>
<path d="M1694 477c3 1 5 5 6 10 1 5 2 9 2 13h-10c1-6 0-14 2-23z" fill="#efdcd2"/>
<path d="M1696 481c2 4 3 10 4 19h-4z" fill="#f8eeea"/>
<rect x="1687" y="480" width="4" height="18" fill="#2a201c"/>
<rect x="1689.5" y="481" width="1.5" height="5" fill="#e8e0dc"/>
<circle cx="1691.5" cy="478.5" r="2" fill="#8a6a58"/>
<path d="M1706 479.5c2-1.5 5-1.5 7 0l-1 3h-5z" fill="#1c1612"/>
<path d="M1708 482h4c2 3 4 8 5 13h-11c0-5 1-10 2-13z" fill="#efe3e0"/>
<circle cx="1710" cy="483" r="1.5" fill="#b08a78"/>
<!-- thumb bg selected -->
<rect x="1683" y="513" width="37.5" height="27.5" fill="#b2f6f4"/>
<path d="M1679.5 520.5v-10h15M1708.5 510.5h15v10M1679.5 534v10h15M1708.5 544h15v-10" fill="none" stroke="#f2f2f2" stroke-width="1.2"/>
<!-- lock -->
<path d="M1868.5 525v-2.5a3.2 3.2 0 0 1 6.4 0v2.5" fill="none" stroke="#d0d0d0" stroke-width="1.3"/>
<rect x="1866.5" y="525" width="10.5" height="8.5" fill="none" stroke="#d0d0d0" stroke-width="1.3"/>
<circle cx="1871.7" cy="529.3" r="1" fill="#d0d0d0"/>
</svg>
<div class="t" style="left:1729px;top:446.5px;font-size:12.5px;color:#e6e6e6">组 1</div>
<div class="t" style="left:1733px;top:481.5px;font-size:12.5px;color:#e6e6e6">效果</div>
<div class="t" style="left:1733px;top:522px;font-size:12.5px;color:#ececec">背景</div>

<!-- layers footer -->
<div class="a" style="left:1639px;top:1046px;width:278px;height:1px;background:#262626"></div>
<div class="a" style="left:1640px;top:1047px;width:277px;height:29px;background:#323232"></div>
<svg style="left:0;top:0" width="1920" height="1080">
<rect x="1689" y="1058.3" width="9" height="7.4" rx="3.7" fill="none" stroke="#9a9a9a" stroke-width="1.6"/>
<rect x="1696" y="1058.3" width="9" height="7.4" rx="3.7" fill="none" stroke="#9a9a9a" stroke-width="1.6"/>
<rect x="1693" y="1061.2" width="8" height="1.6" fill="#9a9a9a"/>
<text x="1720" y="1067" font-family="Liberation Serif" font-style="italic" font-size="16" fill="#8a8a8a">fx</text>
<rect x="1734.5" y="1068.5" width="2" height="1" fill="#8a8a8a"/>
<rect x="1751" y="1056" width="16" height="12" fill="#d6d6d6"/>
<circle cx="1758.6" cy="1061.8" r="3.6" fill="#323232"/>
<circle cx="1788.8" cy="1061.5" r="6" fill="none" stroke="#d6d6d6" stroke-width="1.4"/>
<path d="M1793.1 1057.2a6 6 0 0 1-8.5 8.5z" fill="#d6d6d6"/>
<path d="M1795.5 1069h4l-2 2.2z" fill="#d6d6d6"/>
<path d="M1811 1057.5h5.5l1.5 1.3h8v9.2h-15z" fill="#d6d6d6"/>
<path d="M1843.5 1056.5h12.5v11.5h-7.5l-5-4.5z" fill="none" stroke="#d6d6d6" stroke-width="1.4"/>
<path d="M1843.5 1063.5h5v4.5z" fill="#d6d6d6"/>
<path d="M1872.5 1057.5h14M1877 1057.5v-2h5v2M1874 1058.5v10.5h11v-10.5M1877 1060.5v6.5M1879.5 1060.5v6.5M1882 1060.5v6.5" fill="none" stroke="#d6d6d6" stroke-width="1.4"/>
</svg>

<div class="a" style="left:0;top:1078px;width:1920px;height:2px;background:#242424"></div>
<div class="a" style="left:60px;top:1079px;width:430px;height:1px;background:#f0f0f0"></div>
<div class="a" style="left:740px;top:1079px;width:61px;height:1px;background:#6a6a6a"></div>
</body></html>
